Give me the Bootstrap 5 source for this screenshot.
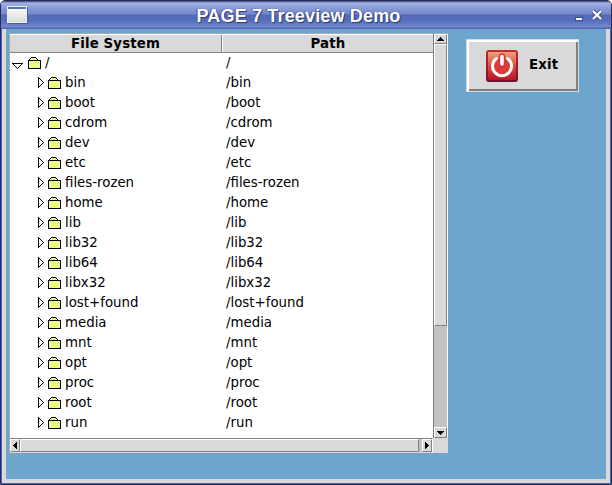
<!DOCTYPE html>
<html lang="en">
<head>
<meta charset="utf-8">
<title>PAGE 7 Treeview Demo</title>
<link href="https://cdn.jsdelivr.net/npm/bootstrap@5.3.0/dist/css/bootstrap.min.css" rel="stylesheet">
<style>
body{width:612px;height:485px;overflow:hidden;background:#fff;font-family:"DejaVu Sans",sans-serif;font-size:13.33px;line-height:20px;color:#000}
svg{display:block;flex:none}
.window{width:612px;height:485px;background:#d9d9d9;border:1px solid #262c5a;border-radius:5px 5px 0 0;overflow:hidden}
.frame{border:solid #4c65b8;border-width:0 1px 1px}
.titlebar{height:28px;flex:none;background:linear-gradient(#303970 0,#a3b2e2 2px,#8e9edb 6px,#7488cb 13px,#536bb5 14px,#576fbc 20px,#7488cc 26px,#5165bb 27px,#5165bb 28px);padding:0 8px 0 6px}
.app-title{flex:1;text-align:center;font:bold 18px/28px "Liberation Sans",sans-serif;letter-spacing:.16px;color:#fff;text-shadow:1px 1px 1px #2c3978,-1px 0 1px #485ca5;padding-right:6px;padding-top:1px}
.client{margin:0 4px 4px;background:#6ea5cd;padding:4px 0 0 3px}
.tree{width:439px;height:420px;background:#d9d9d9;border-left:1px solid #a9a9a9;border-top:1px solid #a9a9a9}
.pane{width:423px;height:404px;background:#fff}
.headings{height:19px;background:#d9d9d9;border-top:1px solid #fff;border-bottom:1px solid #808080;font-weight:bold;line-height:17px;text-align:center;letter-spacing:.15px}
.col-a{width:212px;border-right:1px solid #808080}
.col-b{flex:1;border-left:1px solid #fff}
.item{height:20px}
.name-cell{width:216px;white-space:pre}
.vbar{width:15px;height:404px;background:#c3c3c3;border-left:1px solid #808080;border-right:1px solid #fff}
.hbar{width:423px;height:15px;background:#c3c3c3;border-top:1px solid #808080;border-right:1px solid #fff;border-bottom:1px solid #d9d9d9}
.raised{background:#d9d9d9;border:1px solid;border-color:#fff #808080 #808080 #fff;display:flex;align-items:center;justify-content:center}
.vbar .raised{width:13px}
.hbar .raised{height:13px}
.exit{width:113px;height:53px;margin:6px 0 0 18px;background:#d9d9d9;border:1px solid #d9d9d9;border-radius:0;padding:0 0 0 19px;box-shadow:inset 2px 2px #fff,inset -2px -2px #808080;font-weight:bold;color:#000;font-size:13.33px;line-height:20px}
.exit-label{margin:-2px 0 0 11px;letter-spacing:.2px}
</style>
<script src="https://cdn.jsdelivr.net/npm/bootstrap@5.3.0/dist/js/bootstrap.bundle.min.js"></script>
</head>
<body>
<div class="window d-flex flex-column">
  <header class="titlebar d-flex align-items-center">
    <svg width="21" height="18"><defs><linearGradient id="wg" x2="0" y2="1"><stop stop-color="#fff"/><stop offset="1" stop-color="#d9dcd5"/></linearGradient></defs><rect x="1" y="1" width="20" height="17" rx="1" fill="#4d5d91"/><rect x=".5" y=".5" width="19" height="16" fill="url(#wg)" stroke="#eee"/><path d="M1 1h18v2H1z" fill="#4b7ab5"/></svg>
    <h1 class="app-title m-0">PAGE 7 Treeview Demo</h1>
    <svg width="28" height="28"><path d="M0 16h8v4H0z" fill="#3c4c8c"/><path d="M1 17h6v2H1z" fill="#fff"/><path d="M18 10l8 8M26 10l-8 8" stroke="#3c4c8c" stroke-width="4"/><path d="M18 10l8 8M26 10l-8 8" stroke="#fff" stroke-width="2.3"/></svg>
  </header>
  <div class="frame flex-grow-1 d-flex">
    <main class="client flex-grow-1 d-flex align-items-start">
      <section class="tree">
        <div class="d-flex">
          <div class="pane">
            <div class="headings d-flex"><div class="col-a">File System</div><div class="col-b">Path</div></div>
            <div id="rows"></div>
          </div>
          <div class="vbar d-flex flex-column">
            <div class="raised" style="height:10px"><svg width="7" height="4" shape-rendering="crispEdges"><path d="M3 0h1v1h1v1h1v1h1v1H0V3h1V2h1V1h1z"/></svg></div>
            <div class="raised" style="height:282px"></div>
            <div class="flex-grow-1"></div>
            <div class="raised" style="height:11px"><svg width="7" height="4" shape-rendering="crispEdges"><path d="M0 0h7v1H6v1H5v1H4v1H3V3H2V2H1V1H0z"/></svg></div>
          </div>
        </div>
        <div class="hbar d-flex">
          <div class="raised" style="width:10px"><svg width="4" height="7" shape-rendering="crispEdges"><path d="M0 3h1V2h1V1h1V0h1v7H3V6H2V5H1V4H0z"/></svg></div>
          <div class="raised" style="width:399px"></div>
          <div class="flex-grow-1"></div>
          <div class="raised" style="width:10px"><svg width="4" height="7" shape-rendering="crispEdges"><path d="M0 0h1v1h1v1h1v1h1v1H3v1H2v1H1v1H0z"/></svg></div>
        </div>
      </section>
      <button class="exit btn d-flex align-items-center">
        <svg width="32" height="32"><defs><linearGradient id="rg" x2="0" y2="1"><stop stop-color="#eda180"/><stop offset=".45" stop-color="#dc5444"/><stop offset="1" stop-color="#b91426"/></linearGradient><linearGradient id="rb" x2="0" y2="1"><stop stop-color="#c92c20"/><stop offset="1" stop-color="#730c31"/></linearGradient></defs><rect width="32" height="32" rx="3" fill="url(#rb)"/><rect x="2" y="2" width="28" height="28" rx="1" fill="url(#rg)"/><circle cx="16" cy="16" r="9" fill="#df3b35"/><path d="M10.5 8.5a9.5 9.5 0 1 0 11 0" fill="none" stroke="#fff" stroke-width="3" stroke-linecap="round"/><path d="M16 6.5v8" stroke="#d63a30" stroke-width="6.4" stroke-linecap="round"/><path d="M16 6.5v7.5" stroke="#fff" stroke-width="3.6" stroke-linecap="round"/></svg>
        <span class="exit-label">Exit</span>
      </button>
    </main>
  </div>
</div>
<script>
const folder='<svg width="13" height="20" shape-rendering="crispEdges"><path d="M3 5h5v1h1v1H2V6h1zM1 8h11v7H1z" fill="#eeff80"/><path d="M3 4h5v1H3zM2 5h1v1H2zM8 5h1v1H8zM1 6h1v1H1zM9 6h1v1H9zM0 7h13v9H0zM1 8v7h11V8z" fill-rule="evenodd"/></svg>';
const closed='<svg width="6" height="20" shape-rendering="crispEdges"><path d="M0 4h1v11H0zM1 5h1v1H1zM2 6h1v1H2zM3 7h1v1H3zM4 8h1v1H4zM5 9h1v1H5zM4 10h1v1H4zM3 11h1v1H3zM2 12h1v1H2zM1 13h1v1H1z"/></svg>';
const opened='<svg width="11" height="20" shape-rendering="crispEdges"><path d="M0 10h11v1H0zM1 11h1v1H1zM2 12h1v1H2zM3 13h1v1H3zM4 14h1v1H4zM5 15h1v1H5zM6 14h1v1H6zM7 13h1v1H7zM8 12h1v1H8zM9 11h1v1H9z"/></svg>';
const names=['','bin','boot','cdrom','dev','etc','files-rozen','home','lib','lib32','lib64','libx32','lost+found','media','mnt','opt','proc','root','run'];
document.getElementById('rows').innerHTML=names.map((n,i)=>`<div class="item d-flex"><div class="name-cell d-flex" style="padding-left:${i?28:2}px">${i?closed:opened}<span style="width:${i?4:5}px"></span>${folder}<span style="margin-left:4px">${n||'/'}</span></div><div>/${n}</div></div>`).join('');
</script>
</body>
</html>
